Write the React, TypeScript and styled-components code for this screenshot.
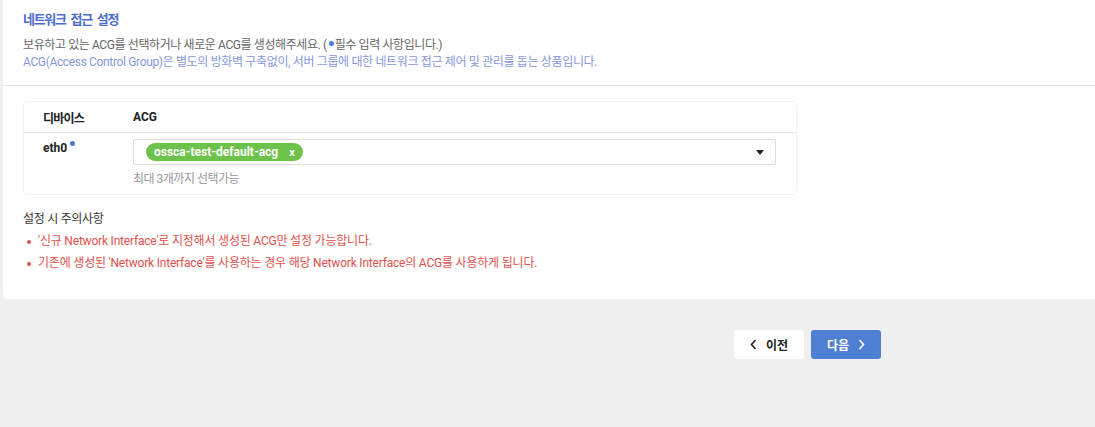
import React from "react";
import styled, { createGlobalStyle } from "styled-components";

const Global = createGlobalStyle`
  html, body { margin: 0; padding: 0; background: #efefef; }
  body { font-family: Roboto, "Noto Sans CJK KR", "Noto Sans", sans-serif; color: #333; }
  * { box-sizing: border-box; }
`;

const Page = styled.div`
  width: 1095px;
  height: 427px;
  background: #efefef;
  padding-left: 3px;
`;

const Card = styled.div`
  background: #fff;
  border-radius: 0 0 0 4px;
  height: 299px;
  display: flex;
  flex-direction: column;
`;

const Header = styled.div`
  padding: 10px 20px 14px;
  border-bottom: 1px solid #e3e3e3;
`;

const Title = styled.h2`
  margin: 0;
  font-size: 13px;
  line-height: 20px;
  font-weight: 700;
  letter-spacing: -1.3px;
  word-spacing: 3px;
  color: #4a6cc8;
`;

const Desc = styled.p<{ $tone?: "gray" | "blue" }>`
  margin: 0;
  font-size: 12px;
  line-height: 17px;
  letter-spacing: ${(p) => (p.$tone === "blue" ? "-0.35px" : "-0.4px")};
  color: ${(p) => (p.$tone === "blue" ? "#8598de" : "#666")};
  &:first-of-type { margin-top: 7px; }
`;

const Dot = styled.span`
  display: inline-block;
  width: 5px;
  height: 5px;
  border-radius: 50%;
  background: #4a78d4;
  vertical-align: top;
  margin: 4px 1px 0 2px;
`;

const Body = styled.div`
  padding: 15px 20px 0;
`;

const Table = styled.div`
  width: 774px;
  border: 1px solid #f2f2f2;
  border-radius: 4px;
`;

const HeadRow = styled.div`
  display: grid;
  grid-template-columns: 90px 1fr;
  height: 31px;
  align-items: center;
  border-bottom: 1px solid #e3e3e3;
  font-size: 12px;
  font-weight: 700;
  color: #222;
  padding-left: 19px;
`;

const HeadLabel = styled.span<{ $ko?: boolean }>`
  letter-spacing: ${(p) => (p.$ko ? "-0.8px" : "0")};
`;

const Row = styled.div`
  display: grid;
  grid-template-columns: 90px 1fr;
  padding: 6px 20px 6px 19px;
`;

const DeviceCell = styled.div`
  font-size: 12px;
  font-weight: 700;
  color: #222;
  line-height: 16px;
  padding-top: 1px;
`;

const ReqDot = styled.span`
  display: inline-block;
  width: 5px;
  height: 5px;
  border-radius: 50%;
  background: #4a78d4;
  vertical-align: top;
  margin: 1px 0 0 3px;
`;

const Select = styled.div`
  height: 26px;
  border: 1px solid #dcdcdc;
  border-radius: 2px;
  display: flex;
  align-items: center;
  justify-content: space-between;
  padding: 0 11px 0 12px;
`;

const Chip = styled.span`
  display: inline-flex;
  align-items: center;
  height: 18px;
  border-radius: 9px;
  background: #6cc24a;
  color: #fff;
  font-size: 12px;
  font-weight: 700;
  padding: 0 8px;
  gap: 11px;
`;

const ChipX = styled.span`
  font-size: 11px;
  font-weight: 700;
`;

const Caret = styled.span`
  width: 0;
  height: 0;
  border-left: 4px solid transparent;
  border-right: 4px solid transparent;
  border-top: 5px solid #222;
`;

const Hint = styled.div`
  font-size: 12px;
  letter-spacing: -0.5px;
  color: #999;
  margin-top: 6px;
  line-height: 17px;
`;

const Notes = styled.div`
  padding: 16px 20px 0;
`;

const NotesTitle = styled.div`
  font-size: 12px;
  letter-spacing: -0.3px;
  color: #333;
  line-height: 17px;
  margin-bottom: 5px;
`;

const NoteList = styled.ul`
  list-style: none;
  margin: 0;
  padding: 0;
  display: flex;
  flex-direction: column;
  gap: 5px;
`;

const NoteItem = styled.li`
  position: relative;
  padding-left: 15px;
  font-size: 12px;
  line-height: 17px;
  letter-spacing: -0.2px;
  color: #e0504a;
  &::before {
    content: "";
    position: absolute;
    left: 4px;
    top: 7px;
    width: 4px;
    height: 4px;
    border-radius: 50%;
    background: #d9534f;
  }
`;

const Footer = styled.div`
  display: flex;
  justify-content: flex-end;
  gap: 7px;
  padding: 31px 214px 0 0;
`;

const Btn = styled.button<{ $primary?: boolean }>`
  width: 70px;
  height: 29px;
  border: none;
  border-radius: 3px;
  background: ${(p) => (p.$primary ? "#4f7fd2" : "#fff")};
  color: ${(p) => (p.$primary ? "#fff" : "#222")};
  font-family: inherit;
  font-size: 12px;
  font-weight: 700;
  display: flex;
  align-items: center;
  justify-content: center;
  gap: 9px;
  padding: 0;
  cursor: pointer;
`;

const Chevron = ({ dir }: { dir: "left" | "right" }) => (
  <svg width="7" height="11" viewBox="0 0 7 11" fill="none">
    <path
      d={dir === "left" ? "M5.5 1 L1.5 5.5 L5.5 10" : "M1.5 1 L5.5 5.5 L1.5 10"}
      stroke="currentColor"
      strokeWidth="1.6"
    />
  </svg>
);

export default function App() {
  return (
    <Page>
      <Global />
      <Card>
        <Header>
          <Title>네트워크 접근 설정</Title>
          <Desc>
            보유하고 있는 ACG를 선택하거나 새로운 ACG를 생성해주세요. (<Dot />필수 입력 사항입니다.)
          </Desc>
          <Desc $tone="blue">
            ACG(Access Control Group)은 별도의 방화벽 구축없이, 서버 그룹에 대한 네트워크 접근 제어 및 관리를 돕는 상품입니다.
          </Desc>
        </Header>
        <Body>
          <Table>
            <HeadRow>
              <HeadLabel $ko>디바이스</HeadLabel>
              <HeadLabel>ACG</HeadLabel>
            </HeadRow>
            <Row>
              <DeviceCell>
                eth0<ReqDot />
              </DeviceCell>
              <div>
                <Select>
                  <Chip>
                    ossca-test-default-acg<ChipX>x</ChipX>
                  </Chip>
                  <Caret />
                </Select>
                <Hint>최대 3개까지 선택가능</Hint>
              </div>
            </Row>
          </Table>
        </Body>
        <Notes>
          <NotesTitle>설정 시 주의사항</NotesTitle>
          <NoteList>
            <NoteItem>'신규 Network Interface'로 지정해서 생성된 ACG만 설정 가능합니다.</NoteItem>
            <NoteItem>기존에 생성된 'Network Interface'를 사용하는 경우 해당 Network Interface의 ACG를 사용하게 됩니다.</NoteItem>
          </NoteList>
        </Notes>
      </Card>
      <Footer>
        <Btn>
          <Chevron dir="left" />
          이전
        </Btn>
        <Btn $primary>
          다음
          <Chevron dir="right" />
        </Btn>
      </Footer>
    </Page>
  );
}
